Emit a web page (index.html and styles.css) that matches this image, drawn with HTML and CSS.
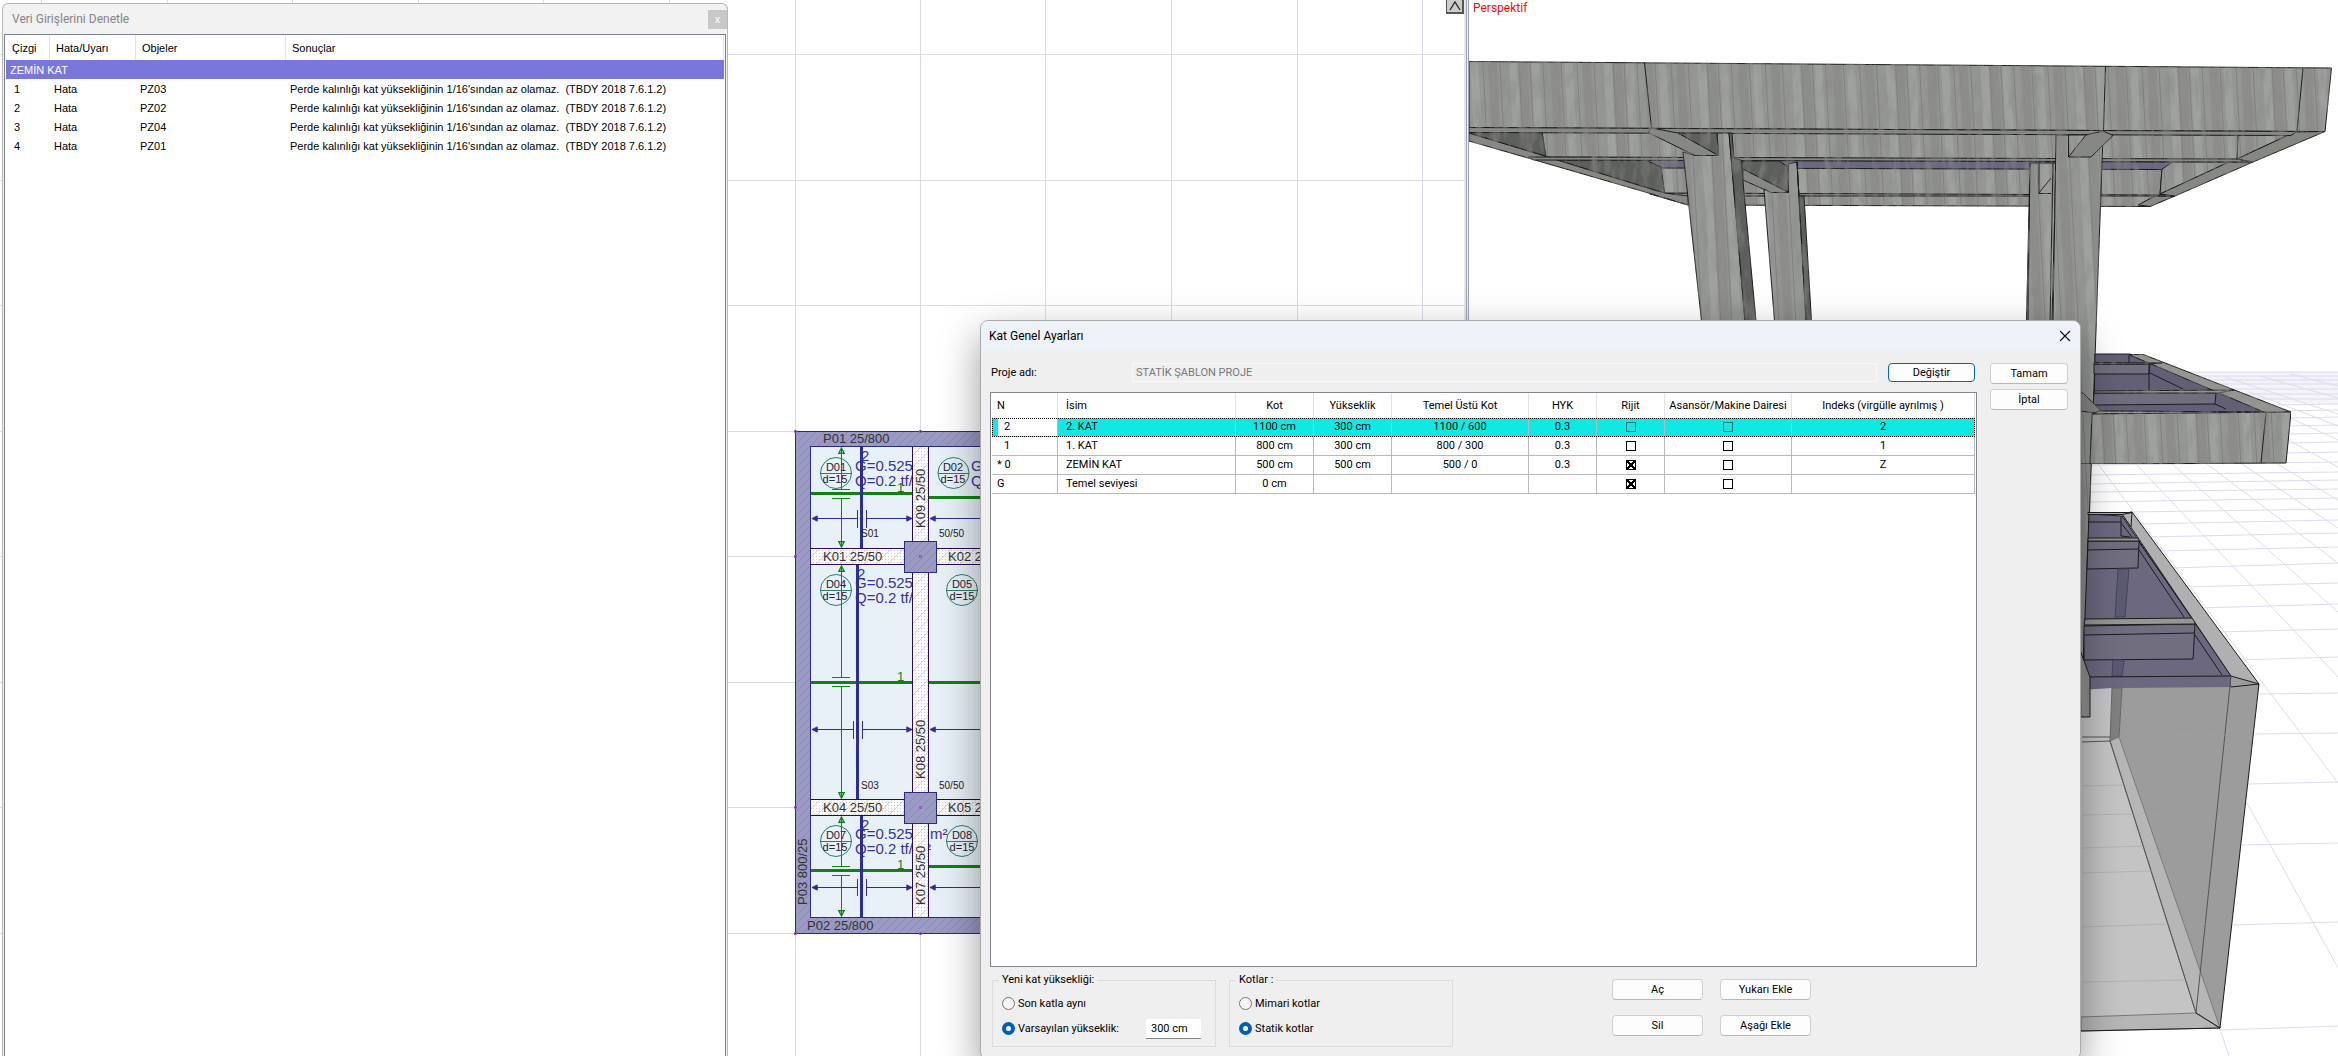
FILE: index.html
```html
<!DOCTYPE html>
<html lang="tr">

<head>
  <meta charset="utf-8">
  <title>Kat Genel Ayarları</title>
  <link rel="stylesheet" href="styles.css">
</head>

<body>
  <div class="workspace">
    <div class="plan-view">
      <svg class="drawing" viewBox="0 0 1464 1056" preserveAspectRatio="xMinYMin slice">
        <defs>
          <pattern id="wall" width="8" height="8" patternUnits="userSpaceOnUse">
            <rect width="8" height="8" fill="#9b9ac4" />
            <path d="M-1 9L9 -1" stroke="#8d8ca6" />
          </pattern>
          <pattern id="beam" width="12" height="12" patternUnits="userSpaceOnUse">
            <rect width="12" height="12" fill="#fafafa" />
            <path d="M0 1.5H12M0 4.5H12M0 7.5H12M0 10.5H12" stroke="#cfcfcf" stroke-dasharray="1 2" />
            <path d="M-1 13L13 -1" stroke="#d5d5d5" />
          </pattern>
          <marker id="green-arrow" viewBox="0 0 8 8" refX="7" refY="4" markerWidth="7" markerHeight="7" markerUnits="userSpaceOnUse" orient="auto-start-reverse">
            <path d="M1 1L7 4L1 7Z" fill="none" stroke="#0c860c" stroke-width="1.5" />
          </marker>
          <marker id="blue-arrow" viewBox="0 0 8 8" refX="7" refY="4" markerWidth="7" markerHeight="7" markerUnits="userSpaceOnUse" orient="auto-start-reverse">
            <path d="M1 1L7 4L1 7Z" fill="#2c2c9a" stroke="#2c2c9a" />
          </marker>
        </defs>

        <!-- axis grid -->
        <path class="axis" d="M41.5 0V1056M167.5 0V1056M292.5 0V1056M418.5 0V1056M543.5 0V1056M669.5 0V1056M795.5 0V1056M920.5 0V1056M1045.5 0V1056M1171.5 0V1056M1297.5 0V1056M1422.5 0V1056" />
        <path class="axis" d="M0 54.5H1464M0 180.5H1464M0 305.5H1464M0 431.5H1464M0 556.5H1464M0 682.5H1464M0 807.5H1464M0 933.5H1464" />

        <!-- walls -->
        <rect class="outline" x="795.5" y="431.5" width="400" height="502" fill="url(#wall)" />
        <rect class="outline" x="810.5" y="446.5" width="380" height="471" fill="#e8f1f8" />

        <!-- slab labels -->
        <g class="load">
          <text x="861" y="461">2</text>
          <text x="855" y="471">G=0.525</text>
          <text x="855" y="486">Q=0.2 tf/</text>
          <text x="971" y="471">G</text>
          <text x="971" y="486">Q</text>
          <text x="857" y="579">2</text>
          <text x="855" y="588">G=0.525</text>
          <text x="855" y="603">Q=0.2 tf/</text>
          <text x="861" y="830">2</text>
          <text x="855" y="839">G=0.525</text>
          <text x="855" y="854">Q=0.2 tf/</text>
          <text x="930" y="839">m²</text>
          <text x="926" y="854">²</text>
        </g>

        <path class="rebar-x" d="M811 493.5H912M929 497.5H990M811 682.5H912M929 682.5H990M811 870.5H912M929 866.5H990" />
        <g class="dim-y">
          <path d="M841.5 448V489.5" marker-start="url(#green-arrow)" />
          <path d="M832 489.5H850M832 498.5H850M832 677.5H850M832 686.5H850M832 866.5H850M832 875.5H850" />
          <path d="M841.5 498.5V547" marker-end="url(#green-arrow)" />
          <path d="M841.5 566V677.5" marker-start="url(#green-arrow)" />
          <path d="M841.5 686.5V798" marker-end="url(#green-arrow)" />
          <path d="M841.5 817V866.5" marker-start="url(#green-arrow)" />
          <path d="M841.5 875.5V916" marker-end="url(#green-arrow)" />
        </g>
        <path class="rebar-y" d="M861.5 447V548M857.5 565V799M861.5 816V917" />
        <g class="dim-x">
          <path d="M812 518.5H857" marker-start="url(#blue-arrow)" />
          <path d="M867 518.5H912" marker-end="url(#blue-arrow)" />
          <path d="M930 518.5H990" marker-start="url(#blue-arrow)" />
          <path d="M812 729.5H853" marker-start="url(#blue-arrow)" />
          <path d="M863 729.5H912" marker-end="url(#blue-arrow)" />
          <path d="M930 729.5H990" marker-start="url(#blue-arrow)" />
          <path d="M812 887.5H857" marker-start="url(#blue-arrow)" />
          <path d="M867 887.5H912" marker-end="url(#blue-arrow)" />
          <path d="M930 887.5H990" marker-start="url(#blue-arrow)" />
          <path d="M857.5 510V528M866.5 510V528M853.5 721V739M862.5 721V739M857.5 879V896M866.5 879V896" />
        </g>

        <!-- beams and columns -->
        <path d="M811 548H990V565H811ZM811 799H990V816H811ZM912 447H929V917H912Z" fill="url(#beam)" />
        <path class="beam-edge" d="M811 548.5H990M811 564.5H990M811 799.5H990M811 815.5H990M912.5 447V917M928.5 447V917" />
        <rect class="outline" x="904.5" y="541.5" width="32" height="31" fill="url(#wall)" />
        <rect class="outline" x="904.5" y="792.5" width="32" height="31" fill="url(#wall)" />
        <path class="node" d="M794.5 430.5h2v2h-2ZM919.5 430.5h2v2h-2ZM794.5 555.5h2v2h-2ZM919.5 555.5h2v2h-2ZM794.5 806.5h2v2h-2ZM919.5 806.5h2v2h-2ZM794.5 932.5h2v2h-2ZM919.5 932.5h2v2h-2Z" />

        <g class="slab-mark">
          <circle cx="836" cy="473" r="15.5" />
          <circle cx="953.5" cy="473" r="15.5" />
          <circle cx="836" cy="590" r="15.5" />
          <circle cx="962" cy="590" r="15.5" />
          <circle cx="836" cy="841" r="15.5" />
          <circle cx="962" cy="841" r="15.5" />
          <path d="M820 473.5H852M938 473.5H969M820 590.5H852M946 590.5H978M820 841.5H852M946 841.5H978" />
        </g>
        <g class="slab-text">
          <text x="836" y="471">D01</text>
          <text x="835" y="483">d=15</text>
          <text x="953" y="471">D02</text>
          <text x="953" y="483">d=15</text>
          <text x="836" y="588">D04</text>
          <text x="835" y="600">d=15</text>
          <text x="962" y="588">D05</text>
          <text x="962" y="600">d=15</text>
          <text x="836" y="839">D07</text>
          <text x="835" y="851">d=15</text>
          <text x="962" y="839">D08</text>
          <text x="962" y="851">d=15</text>
        </g>
        <g class="col-text">
          <text x="861" y="537">S01</text>
          <text x="939" y="537">50/50</text>
          <text x="861" y="789">S03</text>
          <text x="939" y="789">50/50</text>
        </g>
        <g class="rebar-text">
          <text x="897" y="492">1</text>
          <text x="897" y="681">1</text>
          <text x="897" y="869">1</text>
        </g>
        <g class="beam-text">
          <text x="823" y="443">P01 25/800</text>
          <text x="807" y="930">P02 25/800</text>
          <text x="823" y="561">K01 25/50</text>
          <text x="948" y="561">K02 2</text>
          <text x="823" y="812">K04 25/50</text>
          <text x="948" y="812">K05 2</text>
          <text transform="translate(925 528) rotate(-90)">K09 25/50</text>
          <text transform="translate(925 779) rotate(-90)">K08 25/50</text>
          <text transform="translate(925 905) rotate(-90)">K07 25/50</text>
          <text transform="translate(807 905) rotate(-90)">P03 800/25</text>
        </g>
      </svg>
      <button type="button" class="scroll-up" aria-label="Yukarı">
        <svg width="12" height="10" viewBox="0 0 12 10"><path d="M1 9L6 1L11 9" fill="none" stroke="#222" stroke-width="1.3" /></svg>
      </button>
    </div>
    <div class="splitter"></div>
    <div class="model-view">
      <svg class="drawing" viewBox="1469 0 869 1056" preserveAspectRatio="xMinYMin slice">
        <defs>
          <pattern id="boards" width="94" height="400" patternUnits="userSpaceOnUse" patternTransform="rotate(-3)">
            <rect width="94" height="400" fill="#949794" />
            <path d="M4 0V400M26 0V400M59 0V400" stroke="#9ea19e" stroke-width="8" />
            <path d="M14 0V400M45 0V400M77 0V400" stroke="#8d8e8b" stroke-width="9" />
            <path d="M9.5 0V400M20.5 0V400M33.5 0V400M51.5 0V400M67.5 0V400M84.5 0V400" stroke="#7f817e" />
          </pattern>
          <filter id="grain" x="0" y="0" width="100%" height="100%">
            <feTurbulence type="fractalNoise" baseFrequency=".12 .04" numOctaves="4" seed="4" />
            <feColorMatrix values="0 0 0 0 .25  0 0 0 0 .25  0 0 0 0 .24  1.4 0 0 0 -.6" />
            <feComposite in2="SourceAlpha" operator="in" result="noise" />
            <feMerge>
              <feMergeNode in="SourceGraphic" />
              <feMergeNode in="noise" />
            </feMerge>
          </filter>
        </defs>

        <!-- ground grid -->
        <path d="M2190 372H2338V404L2268 402Z" fill="#f3f3f9" />
        <g class="ground">
          <path d="M2185 372H2338M2190 376H2338M2200 380H2338M2210 384H2338M2220 389H2338M2230 394H2338M2245 399H2338M2260 405L2338 404M2275 411L2338 410M2290 418L2338 417M2290 426L2338 425M2290 434L2338 433M2288 443L2338 442M2287 453L2338 452" />
          <path d="M2090 465L2338 462M2090 475L2338 472M2090 484L2338 480M2090 492L2338 489M2090 502L2338 498M2130 512L2338 509M2140 524L2338 520M2148 537L2338 533M2160 551L2338 547M2170 568L2338 563M2184 587L2338 583M2200 608L2338 604M2218 632L2338 629M2238 660L2338 657M2260 694L2338 693M2255 734L2338 733M2248 784L2338 782M2241 845L2338 843M2232 925L2338 922M2220 1030L2338 1026" />
          <path d="M2098 464L2268 690L2338 783M2135 463L2338 677M2172 464L2338 612M2207 464L2338 563M2242 464L2338 528M2277 464L2338 500M2288 440L2338 467M2290 418L2338 440M2250 392L2338 426M2225 377L2338 414M2260 376L2338 398M2290 374L2338 386M2247 803L2338 968M2220 1029L2229 1056" />
        </g>

        <!-- roof frame, back to front -->
        <g class="edge" filter="url(#grain)">
          <path class="concrete" d="M1650 194L2175 195L2150 206.5L1688 205Z" />
          <path class="soffit" d="M1652 193L2160 194L2173 196L1665 196ZM2155 196H2175L2150 206.5L2138 205Z" />
          <path class="concrete" d="M1661 167L2162 169L2160 195L1664 193Z" />
          <path class="slab" d="M1645 160L2173 162L2162 169.5L1661 168Z" />
          <path class="dark" d="M1557 160L1645 160L1661 167L1664.5 193Z" />
          <path class="soffit" d="M1469 133L1545 156L1557 160L1664 193L1688 196V205L1652 194L1528 158L1469 141Z" />
          <path class="concrete" d="M2173 162H2229L2160 194L2162 169Z" />
          <path class="soffit" d="M2229 162L2253 162L2175 196L2160 194Z" />
          <path class="concrete" d="M1542 132L2240 135L2237 160L1546 157Z" />
          <path class="soffit" d="M1528 157L2237 159L2253 162L1534 160Z" />
          <path class="dark" d="M1469 132L1542 132.5L1545.5 156L1469 133Z" />
          <path class="concrete" d="M2238 135L2295 132L2237 159Z" />
          <path class="soffit" d="M2295 132L2325 131.5L2253 162L2237 159Z" />

          <!-- rear columns -->
          <path class="dark" d="M1742 161L1779 161L1788 167L1788.5 192L1742 169Z" />
          <path class="soffit" d="M1743 169L1788.5 192.5H1771L1743 180Z" />
          <path class="concrete" d="M1764 189L1771 192.5H1788.5V164L1797 162L1806 321H1774.5Z" />
          <path class="dark" d="M1797 162L1799 196H1804L1811.5 321H1806Z" />
          <path class="concrete" d="M2030 163H2056L2052 321H2026.5Z" />
          <path class="line" d="M2030 163L2028 321M2051 178L2038.5 193.5H2051M2039 163V193" />

          <path class="concrete" d="M1469 61.5L2331.5 68L2325 131.5L1469 127.5Z" />
          <path class="line" d="M1644.5 63L1651.5 128M2105.5 66.5L2103.5 130.5M2303 68L2297 131" />
          <path class="soffit" d="M1469 127.5L2297 131.5L2291 135.5L1469 132.5Z" />

          <!-- front columns -->
          <path class="concrete" d="M1683 152L1695 155.5H1718.5L1717 133H1729L1745 321H1701.5Z" />
          <path class="soffit" d="M1651.5 128L1648 132.5L1695 155.5H1718.5L1678 133Z" />
          <path class="dark" d="M1678 133H1717L1718.5 155.5Z" />
          <path class="dark" d="M1729 133H1732L1734 158L1741 160L1756 321H1745Z" />
          <path class="concrete" d="M2056 135H2103L2096 330L2085 640L2082 720H2040L2053 321Z" />
          <path class="line" d="M2053 163L2050 321" />
          <path class="soffit" d="M2068.5 157H2091L2113 135.5L2103 131L2086 135Z" />
          <path class="line" d="M2068.5 135V157" />
        </g>

        <!-- first floor slab -->
        <g class="edge">
          <path class="slab-top" d="M2095 354H2130L2266 412L2094 411Z" />
          <path class="slab-rib" d="M2094 364H2150L2149 374H2094ZM2094 393L2216 392L2215 404L2093 405Z" />
          <path class="line" d="M2149 364V390M2150 373L2183 389M2129 355V363M2215 404L2226 409" />
          <g filter="url(#grain)">
            <path class="rim" d="M2130 355L2142 354L2291 412L2266 413Z" />
            <path class="rim" d="M2094 362.5L2162 363L2150 364H2094ZM2094 391L2234 390L2218 393H2094Z" />
            <path class="rim" d="M2095 411L2266 412L2266 413.5L2092 414Z" />
            <path class="concrete" d="M2092 414L2291 412L2286 463L2090 464Z" />
            <path class="line" d="M2266 412L2261 463" />
            <path class="soffit" d="M2080 393H2083L2100 410L2095 413L2080 411Z" />
            <path class="line" d="M2080 464H2091" />
          </g>
        </g>

        <!-- basement -->
        <g class="edge">
          <path class="pit" d="M2089 514L2122 516L2231 676V688L2082 692Z" />
          <path class="slab-rib" d="M2088 541H2139L2138 568L2087 569ZM2084 626L2195 624L2193 659L2084 660Z" />
          <path class="post" d="M2118 569H2129L2125 617H2115ZM2113 660H2124L2122 676H2112Z" />
          <path class="line" d="M2088 522H2121M2121 516V536L2130 537M2121 523L2132 537M2139 550L2184 617M2139 542L2192 618M2195 635L2222 675M2082 677L2231 676M2084 635L2195 633M2087 550L2139 549" />
          <path class="rim" d="M2088 538H2139V541H2088ZM2085 619L2195 618V624L2084 625Z" />
          <path class="wall-front" d="M2122 688L2231 687V676L2259 684L2220 1028L2119 737Z" />
          <path class="wall-top" d="M2132 512L2259 684L2231 676L2122 514Z" />
          <path class="wall-top" d="M2122 514L2132 512L2131 527Z" />
          <path class="wall-top" d="M2088 512.5H2132L2122 514.5H2088Z" />
          <path class="floor" d="M2081 690L2112 688L2110 741L2196 1013L2081 1017Z" />
          <path class="wall-corner" d="M2112 688H2122L2119 737L2110 741Z" />
          <path class="floor-edge" d="M2110 741L2119 737L2220 1028L2196 1013Z" />
          <path class="floor-edge" d="M2081 1017L2196 1013L2220 1028L2081 1031Z" />
          <path class="hidden-line" d="M2231 676L2196 1013M2082 742L2110 741L2196 1013M2082 737H2110" />
          <path class="seam" d="M2082 786L2124 785M2082 815L2134 814M2082 848L2144 846M2082 873L2152 871M2082 927L2168 924M2082 982L2186 980M2122 736L2240 735M2150 815L2213 814M2182 924L2232 924" />
          <path class="line" d="M2231 687L2259 684L2220 1028L2081 1031M2196 1013L2220 1028" />
          <path class="concrete" d="M2080 650L2090 677V717H2080Z" />
        </g>
      </svg>
      <span class="view-name">Perspektif</span>
    </div>
  </div>

  <section class="check-panel">
    <header class="panel-title">
      <h2>Veri Girişlerini Denetle</h2>
      <button type="button" class="panel-close" aria-label="Kapat">x</button>
    </header>
    <div class="panel-list">
      <table class="results">
        <colgroup>
          <col class="r-line"><col class="r-type"><col class="r-object"><col>
        </colgroup>
        <thead>
          <tr><th>Çizgi</th><th>Hata/Uyarı</th><th>Objeler</th><th>Sonuçlar</th></tr>
        </thead>
        <tbody>
          <tr class="group"><td colspan="4">ZEMİN KAT</td></tr>
          <tr><td>1</td><td>Hata</td><td>PZ03</td><td>Perde kalınlığı kat yüksekliğinin 1/16'sından az olamaz.&nbsp; (TBDY 2018 7.6.1.2)</td></tr>
          <tr><td>2</td><td>Hata</td><td>PZ02</td><td>Perde kalınlığı kat yüksekliğinin 1/16'sından az olamaz.&nbsp; (TBDY 2018 7.6.1.2)</td></tr>
          <tr><td>3</td><td>Hata</td><td>PZ04</td><td>Perde kalınlığı kat yüksekliğinin 1/16'sından az olamaz.&nbsp; (TBDY 2018 7.6.1.2)</td></tr>
          <tr><td>4</td><td>Hata</td><td>PZ01</td><td>Perde kalınlığı kat yüksekliğinin 1/16'sından az olamaz.&nbsp; (TBDY 2018 7.6.1.2)</td></tr>
        </tbody>
      </table>
    </div>
  </section>

  <form class="dialog">
    <header class="dialog-title">
      <h1>Kat Genel Ayarları</h1>
      <button type="button" class="dialog-close" aria-label="Kapat">
        <svg width="12" height="12" viewBox="0 0 12 12"><path d="M1 1L11 11M11 1L1 11" stroke="#111" stroke-width="1.2" /></svg>
      </button>
    </header>
    <div class="dialog-body">
      <div class="main-col">
        <div class="project-row">
          <label for="project">Proje adı:</label>
          <input type="text" id="project" value="STATİK ŞABLON PROJE" disabled>
          <button type="button" class="btn btn-default">Değiştir</button>
        </div>
        <div class="floor-box">
          <table class="floors">
            <colgroup>
              <col class="c-n"><col class="c-name"><col class="c-level"><col class="c-level"><col class="c-base"><col class="c-small"><col class="c-small"><col class="c-lift"><col>
            </colgroup>
            <thead>
              <tr>
                <th>N</th><th>İsim</th><th>Kot</th><th>Yükseklik</th><th>Temel Üstü Kot</th><th>HYK</th><th>Rijit</th><th>Asansör/Makine Dairesi</th><th>Indeks (virgülle ayrılmış )</th>
              </tr>
            </thead>
            <tbody>
              <tr class="selected">
                <td class="num">2</td><td>2. KAT</td><td>1100 cm</td><td>300 cm</td><td>1100 / 600</td><td>0.3</td>
                <td><input type="checkbox" aria-label="Rijit"></td>
                <td><input type="checkbox" aria-label="Asansör/Makine Dairesi"></td>
                <td>2</td>
              </tr>
              <tr>
                <td class="num">1</td><td>1. KAT</td><td>800 cm</td><td>300 cm</td><td>800 / 300</td><td>0.3</td>
                <td><input type="checkbox" aria-label="Rijit"></td>
                <td><input type="checkbox" aria-label="Asansör/Makine Dairesi"></td>
                <td>1</td>
              </tr>
              <tr>
                <td>* 0</td><td>ZEMİN KAT</td><td>500 cm</td><td>500 cm</td><td>500 / 0</td><td>0.3</td>
                <td><input type="checkbox" aria-label="Rijit" checked></td>
                <td><input type="checkbox" aria-label="Asansör/Makine Dairesi"></td>
                <td>Z</td>
              </tr>
              <tr>
                <td>G</td><td>Temel seviyesi</td><td>0 cm</td><td></td><td></td><td></td>
                <td><input type="checkbox" aria-label="Rijit" checked></td>
                <td><input type="checkbox" aria-label="Asansör/Makine Dairesi"></td>
                <td></td>
              </tr>
            </tbody>
          </table>
        </div>
        <div class="options">
          <fieldset>
            <legend>Yeni kat yüksekliği:</legend>
            <div class="option">
              <input type="radio" id="same" name="height"><label for="same">Son katla aynı</label>
            </div>
            <div class="option">
              <input type="radio" id="default" name="height" checked><label for="default">Varsayılan yükseklik:</label>
              <input type="text" class="height-value" value="300 cm" aria-label="Varsayılan yükseklik">
            </div>
          </fieldset>
          <fieldset>
            <legend>Kotlar :</legend>
            <div class="option">
              <input type="radio" id="arch" name="levels"><label for="arch">Mimari kotlar</label>
            </div>
            <div class="option">
              <input type="radio" id="static" name="levels" checked><label for="static">Statik kotlar</label>
            </div>
          </fieldset>
          <div class="floor-buttons">
            <button type="button" class="btn">Aç</button>
            <button type="button" class="btn">Yukarı Ekle</button>
            <button type="button" class="btn">Sil</button>
            <button type="button" class="btn">Aşağı Ekle</button>
          </div>
        </div>
      </div>
      <div class="side-col">
        <button type="submit" class="btn">Tamam</button>
        <button type="button" class="btn">İptal</button>
      </div>
    </div>
  </form>
</body>

</html>
```
FILE: styles.css
```css
* {
  box-sizing: border-box;
}

html {
  height: 100%;
  overflow: hidden;
}

body {
  margin: 0;
  height: 100%;
  overflow: hidden;
  position: relative;
  background: #fff;
  color: #000;
  font-family: Roboto, "Open Sans", sans-serif;
  font-size: 11px;
}

h1,
h2 {
  margin: 0;
  font-size: 12px;
  font-weight: normal;
}

button,
input {
  font: inherit;
  color: inherit;
}

/* drawing area */
.workspace {
  display: flex;
  height: 100%;
}

.plan-view {
  flex: 1464;
  position: relative;
  overflow: hidden;
}

.model-view {
  flex: 869;
  position: relative;
  overflow: hidden;
}

.drawing {
  display: block;
  width: 100%;
  height: 100%;
}

.splitter {
  width: 5px;
  background: #eceff6;
  border-left: 2px solid #e4e4ee;
  border-right: 1px solid #9ba3b3;
  box-shadow: inset 1px 0 #9ba3b3;
}

.scroll-up {
  position: absolute;
  top: 0;
  right: 0;
  width: 18px;
  height: 14px;
  padding: 0;
  display: flex;
  justify-content: center;
  align-items: center;
  background: #ccc;
  border: 1px solid #777;
  border-width: 0 2px 2px 1px;
  border-color: #555;
}

.view-name {
  position: absolute;
  top: 0;
  left: 4px;
  line-height: 17px;
  font-size: 12px;
  color: #f01000;
}

.drawing text {
  font-family: "Liberation Sans", Arial, sans-serif;
}

.axis {
  stroke: #dadaea;
  fill: none;
}

.outline {
  stroke: #2a2a80;
}

.rebar-x {
  stroke: #128012;
  stroke-width: 3;
}

.rebar-y {
  stroke: #2c2c9a;
  stroke-width: 3;
}

.dim-y path {
  stroke: #0c860c;
}

.dim-x path {
  stroke: #2c2c9a;
}

.beam-edge {
  stroke: #2d0a55;
}

.node {
  stroke: #8a50c0;
  fill: none;
}

.slab-mark {
  stroke: #2a8068;
  fill: none;
}

.load {
  font-size: 15px;
  fill: #34349a;
}

.slab-text {
  font-size: 11px;
  fill: #223;
  text-anchor: middle;
}

.col-text {
  font-size: 10px;
  fill: #222;
}

.rebar-text {
  font-size: 13px;
  fill: #128012;
}

.beam-text {
  font-size: 13px;
  fill: #333;
}

.ground {
  stroke: #dcdcec;
  fill: none;
}

.edge path {
  stroke: #1c1c1c;
  stroke-width: 1;
}

.edge .line {
  fill: none;
}

.edge .concrete {
  fill: url(#boards);
}

.edge .soffit {
  fill: #868884;
}

.edge .dark {
  fill: #5c5e5c;
}

.edge .slab {
  fill: #6b6880;
}

.edge .slab-top {
  fill: #625f77;
}

.edge .slab-rib {
  fill: #716e80;
}

.edge .pit {
  fill: #6b6880;
}

.edge .post {
  fill: #5c5972;
  stroke: #45435a;
}

.edge .rim {
  fill: #949792;
}

.edge .wall-top {
  fill: #b0b0b0;
}

.edge .wall-front {
  fill: #9c9c9c;
  stroke: none;
}

.edge .wall-corner {
  fill: #808080;
  stroke: #666;
}

.edge .floor {
  fill: #c4c4c4;
  stroke: none;
}

.edge .floor-edge {
  fill: #b6b6b6;
  stroke: #777;
}

.edge .hidden-line {
  fill: none;
  stroke: #555;
}

.edge .seam {
  fill: none;
  stroke: #a2a2a8;
  stroke-opacity: 0.5;
}

/* result list on the left */
.check-panel {
  position: absolute;
  top: 3px;
  left: 2px;
  bottom: 0;
  width: 726px;
  display: flex;
  flex-direction: column;
  background: #f2f2f2;
  border: 1px solid #b8b8b8;
  border-bottom: 0;
  border-radius: 6px 6px 0 0;
}

.panel-title {
  height: 30px;
  padding-left: 9px;
  display: flex;
  justify-content: space-between;
  align-items: center;
  color: #858585;
}

.panel-close {
  width: 19px;
  height: 19px;
  padding: 0;
  border: 0;
  background: #c8c8c8;
  color: #fff;
}

.panel-list {
  flex: 1;
  margin: 0 1px;
  padding: 0 1px;
  background: #fff;
  border: 1px solid #7b828c;
  border-bottom: 0;
}

table {
  width: 100%;
  table-layout: fixed;
  border-collapse: separate;
  border-spacing: 0;
}

th,
td {
  padding: 0;
  font-weight: normal;
  white-space: nowrap;
}

.results {
  font-family: "Liberation Sans", Arial, sans-serif;
  text-align: left;
}

.results th {
  height: 25px;
  padding-left: 6px;
  border-right: 1px solid #e2e2e2;
}

.results td {
  height: 19px;
  padding-left: 4px;
}

.results td:first-child {
  padding-left: 8px;
}

.results .group td {
  padding-left: 4px;
  background: #7977dc;
  color: #fff;
}

.r-line {
  width: 44px;
}

.r-type {
  width: 86px;
}

.r-object {
  width: 150px;
}

/* floor settings window */
.dialog {
  position: absolute;
  top: 320px;
  left: 980px;
  bottom: -4px;
  width: 1101px;
  display: flex;
  flex-direction: column;
  background: #efefef;
  border: 1px solid #aaa;
  border-radius: 8px;
  box-shadow: 0 16px 40px rgba(0, 0, 0, 0.4);
}

.dialog-title {
  height: 30px;
  padding: 0 8px;
  display: flex;
  justify-content: space-between;
  align-items: center;
  background: #eef3fa;
  border-radius: 7px 7px 0 0;
}

.dialog-close {
  padding: 0;
  width: 14px;
  height: 14px;
  display: flex;
  justify-content: center;
  align-items: center;
  border: 0;
  background: none;
}

.dialog-body {
  flex: 1;
  display: flex;
  gap: 13px;
  padding: 12px 12px 12px 9px;
}

.main-col {
  flex: 1;
  display: flex;
  flex-direction: column;
}

.project-row {
  display: flex;
  height: 19px;
  margin: 0 2px 10px 0;
}

.project-row label {
  width: 142px;
  padding-left: 1px;
  line-height: 20px;
}

.project-row input {
  flex: 1;
  margin-right: 11px;
  padding: 0 3px;
  border: 1px solid #f8f8f8;
  background: #efefef;
  color: #777;
}

.btn {
  height: 21px;
  padding: 0;
  background: #fdfdfd;
  border: 1px solid #d0d0d0;
  border-bottom-color: #b8b8b8;
  border-radius: 4px;
  line-height: 18px;
}

.btn-default {
  width: 87px;
  height: 19px;
  border-color: #0067c0;
  line-height: 16px;
}

.side-col {
  width: 78px;
  display: flex;
  flex-direction: column;
  gap: 5px;
}

.floor-box {
  flex: 1;
  padding: 0 1px;
  background: #fff;
  border: 1px solid #828790;
}

.floors {
  text-align: center;
}

.floors th {
  height: 25px;
  border-right: 1px solid #e2e2e2;
}

.floors td {
  height: 19px;
  line-height: 16px;
  border-right: 1px solid #b9b9b9;
  border-bottom: 1px solid #b9b9b9;
}

.floors th:first-child,
.floors td:first-child {
  padding-left: 5px;
  text-align: left;
}

.floors th:nth-child(2),
.floors td:nth-child(2) {
  padding-left: 8px;
  text-align: left;
}

.floors td.num {
  padding-left: 12px;
}

.floors .selected {
  background: #10e8e4;
  outline: 1px dotted #000;
  outline-offset: -1px;
}

.floors .selected td:first-child {
  background: #fff;
  border-left: 6px solid #10e8e4;
  padding-left: 6px;
}

.c-n {
  width: 66px;
}

.c-name {
  width: 178px;
}

.c-level {
  width: 78px;
}

.c-base {
  width: 137px;
}

.c-small {
  width: 68px;
}

.c-lift {
  width: 127px;
}

input[type="checkbox"] {
  appearance: none;
  display: block;
  width: 10px;
  height: 10px;
  margin: 0 auto;
  border: 1px solid #000;
  background: #fff;
}

.selected input[type="checkbox"] {
  border-color: #08706e;
  background: none;
}

input[type="checkbox"]:checked {
  background:
    linear-gradient(45deg, transparent 42%, #000 42%, #000 58%, transparent 58%),
    linear-gradient(135deg, transparent 42%, #000 42%, #000 58%, transparent 58%),
    #fff;
}

.options {
  display: flex;
  margin: 6px 0 0 2px;
}

fieldset {
  width: 224px;
  height: 74px;
  margin: 0 13px 0 0;
  padding: 4px 9px 0;
  border: 1px solid #dcdcdc;
}

legend {
  margin-left: -3px;
  padding: 0 3px;
  line-height: 14px;
}

.option {
  display: flex;
  align-items: center;
  height: 25px;
}

input[type="radio"] {
  appearance: none;
  width: 13px;
  height: 13px;
  margin: 0 3px 0 0;
  border: 1px solid #777;
  border-radius: 50%;
  background: #f6f6f6;
}

input[type="radio"]:checked {
  border: 4px solid #005fb8;
  background: #fff;
}

.height-value {
  width: 55px;
  height: 20px;
  margin: 0 5px 0 auto;
  padding: 0 5px;
  border: 0;
  border-bottom: 1px solid #868686;
  background: #fff;
}

.floor-buttons {
  display: grid;
  grid-template-columns: 91px 91px;
  grid-auto-rows: 21px;
  gap: 15px 17px;
  margin: 6px 0 0 146px;
}
```
